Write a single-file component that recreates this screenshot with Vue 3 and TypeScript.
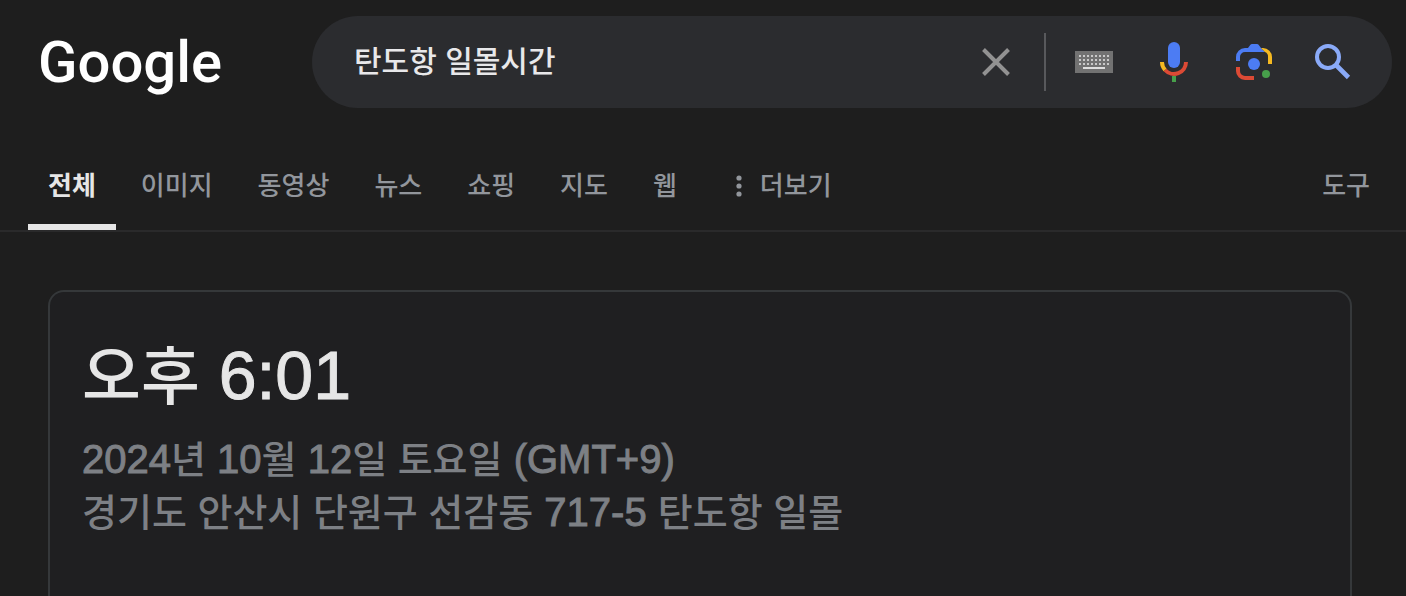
<script setup lang="ts">
import { ref } from 'vue'

interface Segment {
  text: string
  latin?: boolean
}

const query = ref('탄도항 일몰시간')
const tabs: string[] = ['전체', '이미지', '동영상', '뉴스', '쇼핑', '지도', '웹']
const active = ref('전체')

const keyRows = [0, 1, 2]
const keyCols = [0, 1, 2, 3, 4, 5, 6, 7]

const time: Segment[] = [{ text: '오후' }, { text: ' 6:01', latin: true }]

const details: Segment[][] = [
  [
    { text: '2024', latin: true },
    { text: '년' },
    { text: ' 10', latin: true },
    { text: '월' },
    { text: ' 12', latin: true },
    { text: '일 토요일' },
    { text: ' (GMT+9)', latin: true },
  ],
  [
    { text: '경기도 안산시 단원구 선감동' },
    { text: ' 717-5 ', latin: true },
    { text: '탄도항 일몰' },
  ],
]
</script>

<template>
  <div class="page">
    <header class="header">
      <a class="logo" href="#" aria-label="Google">Google</a>
      <form class="search" role="search" @submit.prevent>
        <input v-model="query" class="query" type="text" aria-label="검색" />
        <button class="tool" type="button" aria-label="지우기" @click="query = ''">
          <svg width="28" height="28" viewBox="0 0 28 28">
            <path d="M1.5 1.5 26.5 26.5M26.5 1.5 1.5 26.5" fill="none" stroke="#929292" stroke-width="4" />
          </svg>
        </button>
        <span class="divider"></span>
        <button class="tool" type="button" aria-label="입력 도구">
          <svg width="38" height="22" viewBox="0 0 38 22">
            <rect width="38" height="22" fill="#727272" />
            <g fill="#c9c9c9">
              <template v-for="r in keyRows" :key="r">
                <rect v-for="c in keyCols" :key="c" :x="4 + c * 4" :y="4 + r * 4" width="2" height="2" />
              </template>
            </g>
            <rect x="8" y="16" width="22" height="2" fill="#dedede" />
          </svg>
        </button>
        <button class="tool" type="button" aria-label="음성 검색">
          <svg width="28" height="40" viewBox="0 0 28 40">
            <rect x="8" y="0" width="12" height="26" rx="6" fill="#4c7cf3" />
            <path d="M2 20a12 12 0 0 0 3.1 8" fill="none" stroke="#f5b921" stroke-width="4" />
            <path d="M5.1 28A12 12 0 0 0 26 20" fill="none" stroke="#dc4a35" stroke-width="4" />
            <rect x="12" y="34" width="4" height="6" fill="#479f4b" />
          </svg>
        </button>
        <button class="tool" type="button" aria-label="이미지로 검색">
          <svg width="36" height="36" viewBox="0 0 36 36">
            <path d="M0 17v-4a9 9 0 0 1 9-9h3l2.4-3.2Q15 0 16 0h5q1 0 1.6.8L25 4l4 4H9a5 5 0 0 0-5 5v4z" fill="#4c7cf3" />
            <path d="M25 4h2a9 9 0 0 1 9 9v7h-4v-7a5 5 0 0 0-3-5z" fill="#f5b921" />
            <path d="M0 23h4v4a5 5 0 0 0 5 5h9v4H9a9 9 0 0 1-9-9z" fill="#dc4a35" />
            <circle cx="18" cy="20" r="6" fill="#4c7cf3" />
            <circle cx="30" cy="30" r="4" fill="#479f4b" />
          </svg>
        </button>
        <button class="tool" type="submit" aria-label="Google 검색">
          <svg width="38" height="36" viewBox="0 0 38 36">
            <circle cx="13" cy="13" r="11" fill="none" stroke="#8aaaf8" stroke-width="4" />
            <path d="M21.5 21.5 33.5 33.5" fill="none" stroke="#8aaaf8" stroke-width="4.6" />
          </svg>
        </button>
      </form>
    </header>

    <nav class="tabs">
      <a
        v-for="tab in tabs"
        :key="tab"
        class="tab"
        :class="{ active: tab === active }"
        href="#"
        @click.prevent="active = tab"
      >{{ tab }}</a>
      <button class="tab more" type="button">
        <svg width="6" height="22" viewBox="0 0 6 22" fill="currentColor">
          <circle cx="3" cy="3" r="2.6" />
          <circle cx="3" cy="11" r="2.6" />
          <circle cx="3" cy="19" r="2.6" />
        </svg>
        <span>더보기</span>
      </button>
      <button class="tab tools" type="button">도구</button>
    </nav>

    <main class="results">
      <section class="card">
        <h1 class="time">
          <span v-for="(s, i) in time" :key="i" :class="{ latin: s.latin }">{{ s.text }}</span>
        </h1>
        <p v-for="(line, n) in details" :key="n" class="detail">
          <span v-for="(s, i) in line" :key="i" :class="{ latin: s.latin }">{{ s.text }}</span>
        </p>
      </section>
    </main>
  </div>
</template>

<style>
body {
  margin: 0;
  background: #1e1e1e;
}
</style>

<style scoped>
.page {
  display: flex;
  flex-direction: column;
  min-height: 100vh;
  background: #1e1e1e;
  color: #e6e6e6;
  font-family: 'Liberation Sans', 'Noto Sans CJK KR', sans-serif;
  font-weight: 500;
}

button {
  border: 0;
  background: none;
  font: inherit;
  cursor: pointer;
}

.header {
  display: flex;
  align-items: center;
  padding: 16px 14px 0 38px;
}

.logo {
  flex: 0 0 274px;
  color: #fff;
  font-family: Roboto, sans-serif;
  font-size: 58px;
  font-weight: 500;
  line-height: 92px;
  text-decoration: none;
}

.search {
  display: flex;
  flex: 1;
  align-items: center;
  min-width: 0;
  height: 92px;
  padding: 0 18px 0 42px;
  box-sizing: border-box;
  border-radius: 46px;
  background: #2b2c2f;
}

.query {
  flex: 1;
  min-width: 0;
  height: 60px;
  padding: 0 0 6px;
  box-sizing: border-box;
  border: 0;
  outline: 0;
  background: none;
  color: #e8e8ea;
  font: inherit;
  font-size: 30px;
}

.tool {
  display: flex;
  flex: 0 0 80px;
  align-items: center;
  justify-content: center;
  height: 80px;
  padding: 0;
}

.divider {
  flex: 0 0 2px;
  height: 58px;
  margin: 0 8px;
  background: #58595c;
}

.tabs {
  display: flex;
  gap: 5px;
  margin-top: 34px;
  padding: 0 16px 0 28px;
  border-bottom: 2px solid #2a2a2b;
}

.tab {
  padding: 24px 20px 18px;
  border-bottom: 6px solid transparent;
  color: #92969c;
  font-size: 26px;
  line-height: 40px;
  text-decoration: none;
  white-space: nowrap;
}

.tab.active {
  border-bottom-color: #e6e6e6;
  color: #e6e6e6;
  font-weight: 700;
}

.more {
  display: flex;
  gap: 18px;
  align-items: center;
  margin-left: 14px;
}

.tools {
  margin-left: auto;
}

.results {
  display: flex;
  flex: 1;
  padding: 58px 54px 0 48px;
}

.card {
  flex: 1;
  padding: 33px 32px 60px;
  border: 2px solid #35383a;
  border-bottom: 0;
  border-radius: 16px 16px 0 0;
  background: #1f1f21;
}

.time {
  margin: 0 0 6px;
  font-size: 64px;
  font-weight: 500;
  line-height: 100px;
  white-space: pre-wrap;
}

.time .latin {
  font-size: 68px;
}

.detail {
  margin: 0;
  color: #7d8085;
  font-size: 38px;
  line-height: 52px;
  white-space: pre-wrap;
}

.detail .latin {
  font-size: 40px;
}

.latin {
  -webkit-text-stroke: 1px currentColor;
}
</style>
